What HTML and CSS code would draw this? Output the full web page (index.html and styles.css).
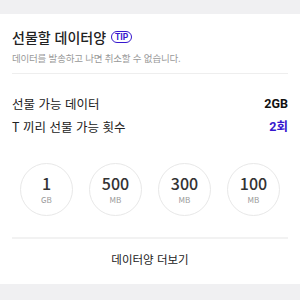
FILE: index.html
```html
<!DOCTYPE html>
<html lang="ko">
<head>
    <meta charset="UTF-8">
    <meta name="viewport" content="width=device-width, initial-scale=1.0">
    <title>데이터 선물하기</title>
    <link rel="stylesheet" href="styles.css">
</head>
<body>
    <div class="top-gap"></div>

    <div class="card">
        <!-- Header -->
        <div class="head">
            <h2 class="title">선물할 데이터양 <span class="tip">TIP</span></h2>
            <p class="desc">데이터를 발송하고 나면 취소할 수 없습니다.</p>
        </div>

        <!-- Info rows -->
        <div class="info">
            <div class="row">
                <span>선물 가능 데이터</span>
                <strong>2GB</strong>
            </div>
            <div class="row">
                <span>T 끼리 선물 가능 횟수</span>
                <strong class="blue">2회</strong>
            </div>
        </div>

        <!-- Amount options -->
        <div class="amounts">
            <button class="amount"><b>1</b><small>GB</small></button>
            <button class="amount"><b>500</b><small>MB</small></button>
            <button class="amount"><b>300</b><small>MB</small></button>
            <button class="amount"><b>100</b><small>MB</small></button>
        </div>

        <div class="more">데이터양 더보기</div>
    </div>

    <div class="bottom-gap"></div>
</body>
</html>
```

FILE: styles.css
```css
body {
    margin: 0;
    padding: 0;
    font-family: "Noto Sans CJK KR", "Noto Sans", sans-serif;
    background-color: #f0f0f2;
    color: #222;
    width: 300px;
    height: 300px;
    overflow: hidden;
}

.top-gap {
    height: 14px;
}

.card {
    background-color: #fff;
    height: 270px;
}

.head {
    margin: 0 12px;
    padding-top: 13px;
    height: 46px;
    border-bottom: 1px solid #eee;
}

.title {
    margin: 0;
    font-size: 14px;
    font-weight: 500;
    line-height: 20px;
    display: flex;
    align-items: center;
    gap: 5px;
}

.tip {
    display: inline-block;
    border: 1px solid #3617ce;
    color: #3617ce;
    border-radius: 6px;
    font-family: "Roboto", sans-serif;
    font-size: 8.5px;
    font-weight: 700;
    line-height: 10px;
    padding: 0 3px;
}

.desc {
    margin: 5px 0 0;
    font-size: 9.5px;
    line-height: 13px;
    color: #999;
    letter-spacing: -0.2px;
}

.info {
    padding: 18px 12px 0;
}

.row {
    display: flex;
    justify-content: space-between;
    align-items: center;
    font-size: 12.5px;
    line-height: 23px;
    color: #222;
}

.row strong {
    font-family: "Roboto", "Noto Sans CJK KR", sans-serif;
    font-weight: 700;
    color: #111;
}

.row strong.blue {
    color: #3617ce;
}

.amounts {
    display: flex;
    gap: 16px;
    padding: 25px 19px 0 20px;
}

.amount {
    width: 53px;
    height: 53px;
    border: 1px solid #e8e8e8;
    border-radius: 50%;
    background: #fff;
    padding: 0;
    display: flex;
    flex-direction: column;
    align-items: center;
    justify-content: center;
    gap: 5px;
    font-family: inherit;
}

.amount b {
    display: block;
    font-size: 16px;
    font-weight: 500;
    color: #333;
    line-height: 16px;
}

.amount small {
    display: block;
    font-size: 8px;
    color: #999;
    line-height: 8px;
}

.more {
    margin: 21px 12px 0;
    border-top: 2px solid #f2f2f2;
    text-align: center;
    font-size: 11.5px;
    line-height: 40px;
    color: #222;
}
```
